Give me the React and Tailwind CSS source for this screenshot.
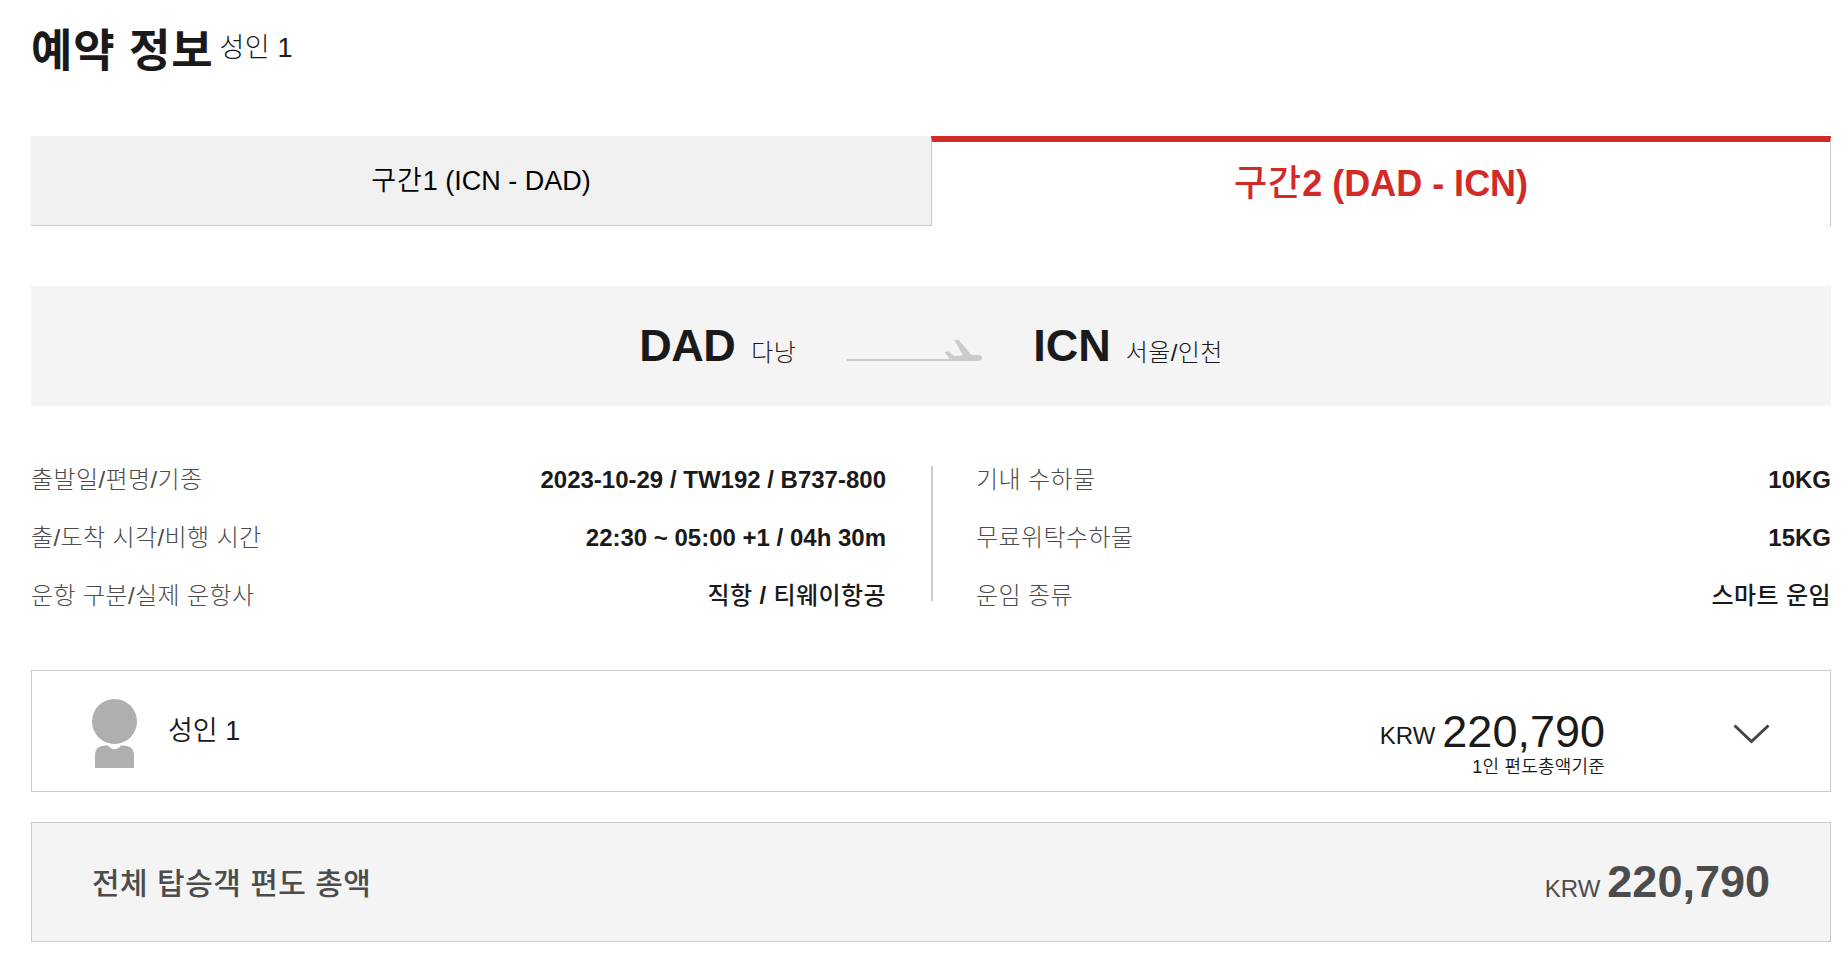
import React, { useState } from "react";

const tabs = [
  { id: 1, name: "구간", route: "1 (ICN - DAD)" },
  { id: 2, name: "구간", route: "2 (DAD - ICN)" },
];

const flightInfo = [
  { label: "출발일/편명/기종", value: "2023-10-29 / TW192 / B737-800" },
  { label: "출/도착 시각/비행 시간", value: "22:30 ~ 05:00 +1 / 04h 30m" },
  { label: "운항 구분/실제 운항사", value: <>직항 <b className="font-bold">/</b> 티웨이항공</>, korean: true },
];

const fareInfo = [
  { label: "기내 수하물", value: "10KG" },
  { label: "무료위탁수하물", value: "15KG" },
  { label: "운임 종류", value: "스마트 운임", korean: true },
];

function PlaneIcon() {
  return (
    <svg width="135" height="21" viewBox="0 0 135 21" fill="#cbcbcb">
      <rect x="0" y="19" width="110" height="2" />
      <path d="M97.5 12 L101.500 11.500 L107 16 L116 15.500 L107.500 0 L111.500 0 L124.500 15 L131 15 Q135 15 135 18 Q135 21 131 21 L104 21 L102 18 Z" />
    </svg>
  );
}

function PersonIcon() {
  return (
    <svg width="45" height="69" viewBox="0 0 45 69" fill="#afafaf">
      <circle cx="22.5" cy="22.5" r="22.5" />
      <path d="M3 69 V57 Q3 46.500 13.500 46.500 H16 Q22.500 54 29 46.500 H31.500 Q42 46.500 42 57 V69 Z" />
    </svg>
  );
}

function InfoList({ items }) {
  return (
    <dl className="flex flex-col">
      {items.map((item) => (
        <div key={item.label} className="flex h-[58px] items-center justify-between text-2xl leading-[58px]">
          <dt className="font-light tracking-[0.4px] text-[#4c4c4c]">{item.label}</dt>
          <dd className={item.korean ? "font-medium tracking-[0.4px] text-[#1a1a1a]" : "font-bold text-[#1a1a1a]"}>
            {item.value}
          </dd>
        </div>
      ))}
    </dl>
  );
}

function App() {
  const [activeTab, setActiveTab] = useState(2);

  return (
    <div className="h-[959px] bg-white pl-[31px] pr-[17px] pt-[26px] font-['Liberation_Sans','Noto_Sans_CJK_KR',sans-serif] text-[#1a1a1a]">
      {/* 제목 */}
      <div className="flex h-[110px] items-start">
        <h1 className="text-[45px] font-bold leading-[52px] tracking-[0.9px]">예약 정보</h1>
        <span className="ml-[6px] text-[27px] font-light leading-[45px] tracking-[0.2px]">성인 1</span>
      </div>

      {/* 구간 탭 */}
      <div className="grid h-[90px] grid-cols-2">
        {tabs.map((tab) => (
          <button
            key={tab.id}
            onClick={() => setActiveTab(tab.id)}
            className={
              tab.id === activeTab
                ? "border-x border-t-[6px] border-x-[#cbcbcb] border-t-[#d22b27] text-4xl font-bold text-[#d22b27]"
                : "border-b border-[#cbcbcb] bg-[#f0f0f0] pt-px text-[27px] text-black"
            }
          >
            <span className={tab.id === activeTab ? "font-medium tracking-[1px]" : "font-[350] tracking-[1px]"}>
              {tab.name}
            </span>
            {tab.route}
          </button>
        ))}
      </div>

      {/* 출발지 / 도착지 */}
      <div className="mt-[60px] flex h-[120px] items-center justify-center bg-[#f4f4f4]">
        <div className="flex items-baseline leading-[60px]">
          <strong className="text-[45px] tracking-[-0.5px]">DAD</strong>
          <span className="ml-[16px] text-2xl font-light tracking-[0.4px]">다낭</span>
          <span className="mx-[51px]">
            <PlaneIcon />
          </span>
          <strong className="text-[45px]">ICN</strong>
          <span className="ml-[15px] text-2xl font-light tracking-[0.4px]">서울/인천</span>
        </div>
      </div>

      {/* 운항 정보 */}
      <div className="mt-[45px] flex">
        <div className="w-[855px]">
          <InfoList items={flightInfo} />
        </div>
        <div className="ml-[45px] mt-[15px] h-[135px] w-[2px] bg-[#cbcbcb]" />
        <div className="ml-[43px] flex-1">
          <InfoList items={fareInfo} />
        </div>
      </div>

      {/* 승객별 금액 */}
      <div className="mt-[45px] flex h-[122px] items-center border border-[#cbcbcb] pl-[60px] pr-[60px]">
        <div className="pt-[5px]">
          <PersonIcon />
        </div>
        <span className="ml-[31px] pt-px text-[27px] font-[350]">성인 1</span>
        <div className="ml-auto mr-[128px] pt-[23px] text-right">
          <p className="flex justify-end">
            <span className="text-2xl leading-[53px]">KRW</span>
            <span className="ml-[7px] text-[45px] leading-[45px]">220,790</span>
          </p>
          <p className="-mt-1 text-lg font-[350] leading-[18px] tracking-[0.2px]">1인 편도총액기준</p>
        </div>
        <button className="pt-[5px]">
          <svg width="37" height="20" viewBox="0 0 37 20" fill="none" stroke="#444" strokeWidth="3">
            <path d="M1.500 1.500 L18.500 17.500 L35.500 1.500" />
          </svg>
        </button>
      </div>

      {/* 전체 금액 */}
      <div className="mt-[30px] flex h-[120px] items-center justify-between border border-[#cbcbcb] bg-[#f4f4f4] px-[60px] text-[#4c4c4c]">
        <span className="pt-[4px] text-3xl font-medium tracking-[0.5px]">전체 탑승객 편도 총액</span>
        <p className="flex items-baseline">
          <span className="text-2xl">KRW</span>
          <strong className="ml-[7px] text-[45px]">220,790</strong>
        </p>
      </div>
    </div>
  );
}

export default App;
